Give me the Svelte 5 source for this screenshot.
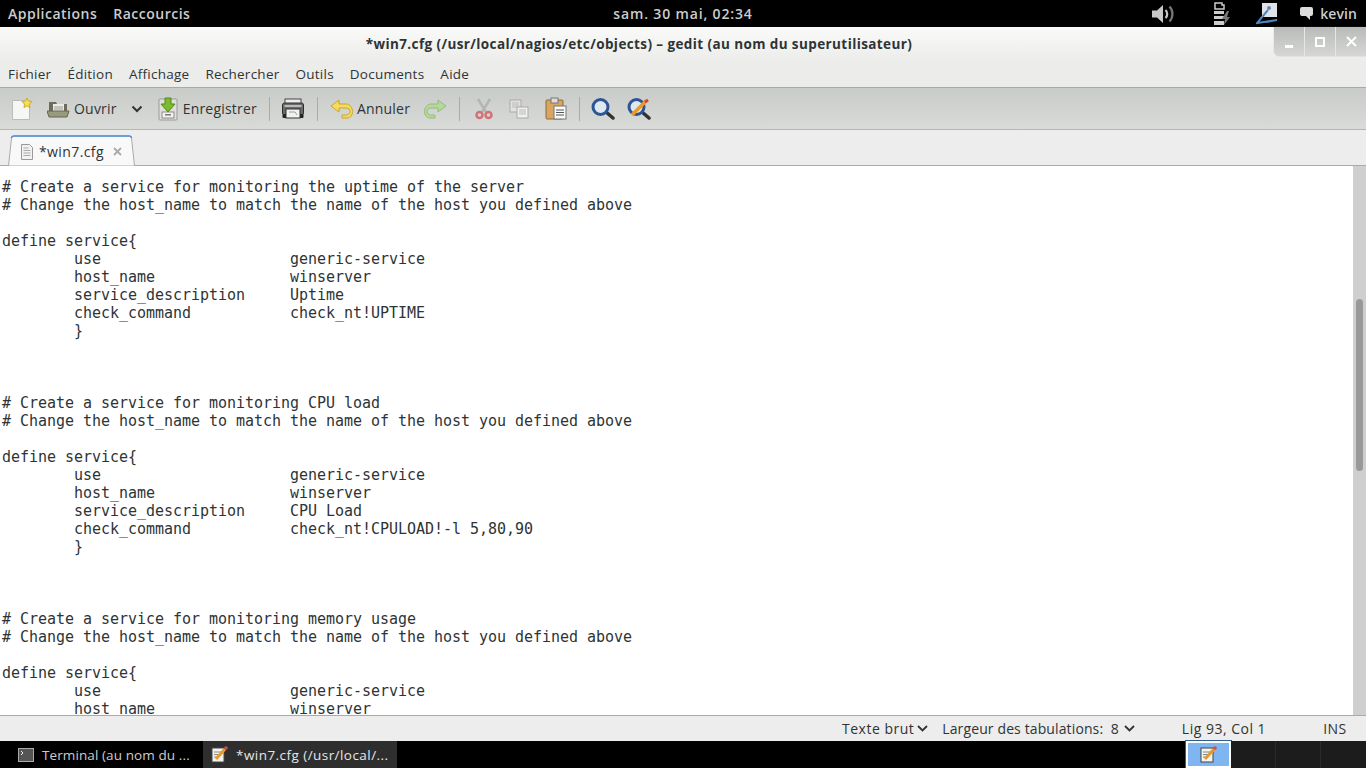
<script lang="ts">
  const menus = ['Fichier', 'Édition', 'Affichage', 'Rechercher', 'Outils', 'Documents', 'Aide'];

  const block = (what: string, desc: string, cmd: string) => `# Create a service for monitoring ${what}
# Change the host_name to match the name of the host you defined above

define service{
        use                     generic-service
        host_name               winserver
        service_description     ${desc}
        check_command           ${cmd}
        }`;

  const code = [
    block('the uptime of the server', 'Uptime', 'check_nt!UPTIME'),
    block('CPU load', 'CPU Load', 'check_nt!CPULOAD!-l 5,80,90'),
    `# Create a service for monitoring memory usage
# Change the host_name to match the name of the host you defined above

define service{
        use                     generic-service
        host_name               winserver`
  ].join('\n\n\n\n');
</script>

<div class="screen">
  <header class="panel">
    <nav class="panel-left">
      <span>Applications</span>
      <span>Raccourcis</span>
    </nav>
    <div class="clock">sam. 30 mai, 02:34</div>
    <div class="panel-right">
      <svg class="tray vol" width="24" height="20" viewBox="0 0 24 20">
        <path d="M0 6.500h5l6-5.500v18l-6-5.500H0z" fill="#c8c8c8" />
        <path d="M13.500 6a5.500 5.500 0 0 1 0 8" fill="none" stroke="#c8c8c8" stroke-width="2.200" />
        <path d="M17.500 2.500a11 11 0 0 1 0 15" fill="none" stroke="#777" stroke-width="2.200" />
      </svg>
      <svg class="tray bat" width="18" height="24" viewBox="0 0 18 24">
        <path d="M2 1h7v2h2v4H2z" fill="none" stroke="#ccc" stroke-width="1.500" />
        <rect x="1" y="9" width="10" height="3" fill="#ccc" />
        <rect x="1" y="14" width="10" height="3" fill="#ccc" />
        <rect x="1" y="19" width="10" height="4" fill="#ccc" />
        <path d="M14 9l-5 8h3l-1 6 6-8h-3l2-6z" fill="#777" />
      </svg>
      <svg class="tray pen" width="24" height="24" viewBox="0 0 24 24">
        <rect x="6" y="1" width="15" height="14" fill="#dfe3e8" />
        <circle cx="13" cy="6" r="2" fill="#6d87a8" />
        <path d="M12 8L1 21l20-3-11 2" fill="none" stroke="#4a86c0" stroke-width="2" />
      </svg>
      <svg class="tray chat" width="15" height="15" viewBox="0 0 15 15">
        <path d="M3 1h9a2 2 0 0 1 2 2v5a2 2 0 0 1-2 2h-1v4l-4-4H3a2 2 0 0 1-2-2V3a2 2 0 0 1 2-2z" fill="#ddd" />
      </svg>
      <span class="user">kevin</span>
    </div>
  </header>

  <div class="window">
    <div class="titlebar">
      <div class="title">*win7.cfg (/usr/local/nagios/etc/objects) – gedit (au nom du superutilisateur)</div>
      <div class="wm-buttons">
        <button aria-label="Réduire"><span class="min"></span></button>
        <button aria-label="Agrandir"><span class="max"></span></button>
        <button aria-label="Fermer">
          <svg width="11" height="11" viewBox="0 0 11 11"><path d="M1 1l9 9M10 1l-9 9" stroke="#fff" stroke-width="2" /></svg>
        </button>
      </div>
    </div>

    <div class="menubar">
      {#each menus as m}<span>{m}</span>{/each}
    </div>

    <div class="toolbar">
      <svg class="ic new" width="24" height="24" viewBox="0 0 24 24">
        <path d="M2.500 3.500h15l2 3v16h-17z" fill="#f6f6f4" stroke="#bbb" />
        <path d="M17 1l1.500 3 3.500.5-2.500 2.500.5 3.500-3-1.700-3 1.700.5-3.500L12 4.500l3.500-.5z" fill="#f8e04a" stroke="#cfa92b" />
      </svg>
      <div class="tool open">
        <svg width="23" height="20" viewBox="0 0 23 20">
          <path d="M2 3h7l1 2h10v8H2z" fill="#6c6c58" />
          <rect x="6" y="5" width="11" height="9" fill="#ecece6" />
          <path d="M7 8h9M7 10h9" stroke="#999" />
          <path d="M0 12h22l-2 6H2z" fill="#9a9a80" stroke="#66664f" />
        </svg>
        <span>Ouvrir</span>
      </div>
      <svg class="chev open-chev" width="12" height="8" viewBox="0 0 12 8"><path d="M1.500 1.500L6 6l4.500-4.500" fill="none" stroke="#333" stroke-width="2" /></svg>
      <div class="tool save">
        <svg width="20" height="24" viewBox="0 0 20 24">
          <rect x="1" y="2" width="18" height="21" rx="1" fill="#e0e0d8" stroke="#999" />
          <rect x="4" y="15" width="12" height="6" fill="#f4f4f0" stroke="#888" />
          <rect x="7" y="17" width="6" height="1.500" fill="#777" />
          <path d="M7 1h6v6h4l-7 8-7-8h4z" fill="#7dba2f" stroke="#4f8a1a" />
        </svg>
        <span>Enregistrer</span>
      </div>
      <i class="sep s1"></i>
      <svg class="ic print" width="22" height="22" viewBox="0 0 22 22">
        <rect x="3" y="1" width="16" height="6" fill="#eee" stroke="#444" />
        <rect x="0.500" y="5" width="21" height="12" rx="2" fill="#6a6a6a" stroke="#2e2e2e" />
        <rect x="2.500" y="7" width="17" height="2" fill="#bbb" />
        <rect x="0.500" y="16" width="21" height="4" rx="1" fill="#222" />
        <rect x="4" y="11" width="14" height="9" fill="#f2f2f2" stroke="#333" />
        <path d="M7 14h6l2 3" stroke="#8ab08a" fill="none" />
      </svg>
      <i class="sep s2"></i>
      <div class="tool undo">
        <svg width="23" height="20" viewBox="0 0 23 20">
          <path d="M9 1L1 7l8 6V9h7c3 0 4 1.500 4 3.500S18.500 16 16 16h-4v3h5c3.500 0 5.500-3 5.500-6.500S20 5 16 5H9z" fill="#f6dc5c" stroke="#c8a52a" />
        </svg>
        <span>Annuler</span>
      </div>
      <svg class="ic redo" width="23" height="20" viewBox="0 0 23 20">
        <path d="M14 1l8 6-8 6V9H7c-3 0-4 1.500-4 3.500S4.500 16 7 16h4v3H6C2.500 19 .5 16 .5 12.500S3 5 7 5h7z" fill="#b6d99a" stroke="#93bc78" />
      </svg>
      <i class="sep s3"></i>
      <svg class="ic cut" width="18" height="22" viewBox="0 0 18 22">
        <path d="M3 1l8 13M15 1L7 14" stroke="#b4b4b4" stroke-width="2.500" />
        <circle cx="4.500" cy="17" r="3" fill="none" stroke="#cf7378" stroke-width="2.500" />
        <circle cx="13.500" cy="17" r="3" fill="none" stroke="#cf7378" stroke-width="2.500" />
      </svg>
      <svg class="ic copy" width="20" height="20" viewBox="0 0 20 20">
        <rect x="1" y="1" width="11" height="12" fill="#e2e2e0" stroke="#aaa" />
        <path d="M3 4h7M3 6h7M3 8h7" stroke="#bbb" />
        <rect x="8" y="8" width="11" height="11" fill="#efefed" stroke="#aaa" />
        <path d="M10 11h7M10 13h7M10 15h7" stroke="#bbb" />
      </svg>
      <svg class="ic paste" width="22" height="23" viewBox="0 0 22 23">
        <rect x="1" y="3" width="17" height="19" rx="1" fill="#d9a55f" stroke="#8c6b3c" />
        <rect x="6" y="1" width="7" height="5" fill="#ddd" stroke="#777" />
        <rect x="9" y="9" width="12" height="13" fill="#fafafa" stroke="#777" />
        <path d="M11 13h8M11 15.500h8M11 18h8" stroke="#555" />
      </svg>
      <i class="sep s4"></i>
      <svg class="ic find" width="24" height="22" viewBox="0 0 24 22">
        <path d="M15 14l7 6" stroke="#333" stroke-width="3.500" stroke-linecap="round" />
        <circle cx="9.500" cy="9" r="7.500" fill="#dfe7ef" stroke="#2c5597" stroke-width="3" />
      </svg>
      <svg class="ic replace" width="24" height="22" viewBox="0 0 24 22">
        <path d="M15 14l7 6" stroke="#333" stroke-width="3.500" stroke-linecap="round" />
        <circle cx="9.500" cy="9" r="7.500" fill="#dfe7ef" stroke="#2c5597" stroke-width="3" />
        <path d="M5 17L19 3" stroke="#e89a2c" stroke-width="3.500" />
        <path d="M18 4l3-2" stroke="#cc4444" stroke-width="3" />
      </svg>
    </div>

    <div class="tabbar">
      <div class="tab">
        <svg class="tab-shape" width="127" height="31" viewBox="0 0 127 31">
          <path d="M.5 31L3.500 3Q3.800 1 6 1H121Q123.200 1 123.500 3L126.500 31z" fill="#f9f9f9" stroke="#a9aba9" />
          <path d="M3.500 3Q3.800 1 6 1H121Q123.200 1 123.500 3" fill="none" stroke="#4a90d9" stroke-width="1.500" />
        </svg>
        <svg class="tab-icon" width="14" height="16" viewBox="0 0 14 16">
          <path d="M1.500.5h8l3 3v12h-11z" fill="#f2f2f2" stroke="#999" />
          <path d="M3.500 4h5M3.500 6.500h7M3.500 9h7M3.500 11.500h7" stroke="#aaa" />
        </svg>
        <span class="tab-name">*win7.cfg</span>
        <svg class="tab-close" width="9" height="9" viewBox="0 0 9 9"><path d="M1 1l7 7M8 1L1 8" stroke="#aaa" stroke-width="1.800" /></svg>
      </div>
    </div>

    <div class="editor">
      <pre>{code}</pre>
      <div class="scroll"><div class="thumb"></div></div>
    </div>

    <div class="statusbar">
      <span class="st-lang">Texte brut</span>
      <svg class="chev c1" width="11" height="7" viewBox="0 0 11 7"><path d="M1 1l4.500 4.500L10 1" fill="none" stroke="#333" stroke-width="1.800" /></svg>
      <span class="st-tab">Largeur des tabulations:&nbsp; 8</span>
      <svg class="chev c2" width="11" height="7" viewBox="0 0 11 7"><path d="M1 1l4.500 4.500L10 1" fill="none" stroke="#333" stroke-width="1.800" /></svg>
      <span class="st-pos">Lig 93, Col 1</span>
      <span class="st-ins">INS</span>
    </div>
  </div>

  <footer class="taskbar">
    <div class="task">
      <svg width="16" height="14" viewBox="0 0 16 14">
        <rect x=".5" y=".5" width="15" height="13" fill="#555" stroke="#aaa" />
        <path d="M3 3l2 2-2 2" stroke="#eee" fill="none" />
      </svg>
      <span>Terminal (au nom du ...</span>
    </div>
    <div class="task active">
      <svg width="17" height="17" viewBox="0 0 17 17">
        <rect x="1" y="2" width="12" height="14" fill="#f2f2ee" stroke="#444" />
        <path d="M3 6h8M3 8.500h6M3 11h4" stroke="#888" />
        <path d="M5 13L14 3" stroke="#e89a2c" stroke-width="3" />
        <circle cx="15" cy="2" r="1.800" fill="#d84a4a" />
      </svg>
      <span>*win7.cfg (/usr/local/...</span>
    </div>
    <div class="workspaces">
      <div class="ws current">
        <svg width="17" height="17" viewBox="0 0 17 17">
          <rect x="1" y="2" width="12" height="14" fill="#f2f2ee" stroke="#444" />
          <path d="M3 6h8M3 8.500h6M3 11h4" stroke="#888" />
          <path d="M5 13L14 3" stroke="#e89a2c" stroke-width="3" />
          <circle cx="15" cy="2" r="1.800" fill="#d84a4a" />
        </svg>
      </div>
      <div class="ws"></div>
      <div class="ws"></div>
      <div class="ws"></div>
    </div>
  </footer>
</div>

<style>
  :global(body) {
    margin: 0;
    overflow: hidden;
  }
  .screen {
    width: 1366px;
    height: 768px;
    display: flex;
    flex-direction: column;
    font-family: "Open Sans", "Noto Sans", sans-serif;
    font-size: 14px;
    color: #2e3436;
    background: #000;
  }

  .panel {
    height: 27px;
    flex: none;
    background: #000;
    color: #ccc;
    display: grid;
    grid-template-columns: 1fr auto 1fr;
    align-items: center;
    font-weight: 600;
    font-size: 14px;
    letter-spacing: 0.5px;
  }
  .panel-left {
    display: flex;
    gap: 16px;
    padding-left: 8px;
  }
  .clock {
    letter-spacing: 0.85px;
  }
  .panel-right {
    display: flex;
    align-items: center;
    justify-content: flex-end;
    padding-right: 9px;
  }
  .tray {
    flex: none;
  }
  .vol { margin-right: 37px; }
  .bat { margin-right: 25px; }
  .pen { margin-right: 19px; }
  .user { margin-left: 6px; letter-spacing: 0.1px; }

  .window {
    flex: 1;
    min-height: 0;
    display: flex;
    flex-direction: column;
    background: #ededed;
  }
  .titlebar {
    height: 34px;
    flex: none;
    box-sizing: border-box;
    padding-right: 88px;
    position: relative;
    display: flex;
    align-items: center;
    justify-content: center;
    background: linear-gradient(#fafaf8, #ececea);
    font-weight: 700;
    font-size: 13.500px;
    letter-spacing: 0.4px;
    color: #2e3436;
  }
  .title {
    margin-top: -1px;
  }
  .wm-buttons {
    position: absolute;
    top: 0;
    right: 0;
    height: 29px;
    display: flex;
    background: linear-gradient(#b9bbb8, #d6d7d5);
    border-radius: 0 0 0 6px;
    box-shadow: 0 0 1px #888;
  }
  .wm-buttons button {
    width: 31px;
    padding: 0;
    border: 0;
    border-left: 1px solid #e6e6e4;
    background: none;
    display: flex;
    align-items: center;
    justify-content: center;
  }
  .wm-buttons button:first-child {
    border-left: 0;
    width: 30px;
  }
  .min {
    width: 8px;
    height: 3px;
    margin-top: 9px;
    background: #fff;
  }
  .max {
    width: 6px;
    height: 6px;
    border: 2px solid #fff;
  }

  .menubar {
    height: 26px;
    flex: none;
    display: flex;
    align-items: center;
    gap: 16px;
    padding-left: 8px;
    background: #ececea;
    font-size: 13.500px;
    letter-spacing: 0.25px;
  }

  .toolbar {
    height: 43px;
    flex: none;
    box-sizing: border-box;
    display: flex;
    align-items: center;
    background: linear-gradient(#c9cbc9, #d9dbd9);
    border-top: 1px solid #a8aaa8;
    border-bottom: 1px solid #b4b6b4;
    padding-left: 10px;
    font-size: 14px;
    letter-spacing: 0.2px;
    color: #2e3436;
  }
  .tool {
    display: flex;
    align-items: center;
    gap: 4px;
  }
  .ic, .tool svg, .chev {
    flex: none;
  }
  .sep {
    width: 1px;
    height: 24px;
    background: #a9aba9;
    flex: none;
  }
  .open { margin-left: 13px; }
  .open-chev { margin-left: 14px; }
  .save { margin-left: 15px; gap: 5px; }
  .s1 { margin-left: 12px; }
  .print { margin-left: 12px; }
  .s2 { margin-left: 13px; }
  .undo { margin-left: 12px; }
  .redo { margin-left: 14px; }
  .s3 { margin-left: 12px; }
  .cut { margin-left: 15px; }
  .copy { margin-left: 16px; }
  .paste { margin-left: 16px; }
  .s4 { margin-left: 12px; }
  .find { margin-left: 11px; }
  .replace { margin-left: 12px; }

  .tabbar {
    height: 36px;
    flex: none;
    box-sizing: border-box;
    display: flex;
    align-items: flex-end;
    padding-left: 8px;
    background: #ededed;
    border-bottom: 1px solid #a9aba9;
  }
  .tab {
    position: relative;
    height: 31px;
    width: 127px;
    box-sizing: border-box;
    margin-bottom: -1px;
    display: flex;
    align-items: center;
    padding: 2px 0 0 12px;
  }
  .tab-shape {
    position: absolute;
    left: 0;
    top: 0;
  }
  .tab-icon, .tab-close, .tab-name {
    position: relative;
  }
  .tab-name {
    font-size: 14px;
    letter-spacing: 0.4px;
    margin: 0 9px 0 5px;
  }

  .editor {
    flex: 1;
    min-height: 0;
    display: flex;
    background: #fff;
    border-bottom: 1px solid #a9aba9;
    overflow: hidden;
  }
  pre {
    flex: 1;
    margin: 0;
    padding: 12px 0 0 2px;
    font-family: "DejaVu Sans Mono", monospace;
    font-size: 15px;
    letter-spacing: -0.03px;
    line-height: 18px;
    color: #2e3436;
    overflow: hidden;
    tab-size: 8;
  }
  .scroll {
    width: 13px;
    flex: none;
    background: #cfcfcf;
    padding: 133px 3px 0;
    box-sizing: border-box;
  }
  .thumb {
    height: 172px;
    background: #98999b;
    border-radius: 4px;
  }

  .statusbar {
    height: 25px;
    flex: none;
    display: flex;
    align-items: center;
    background: #ededed;
    font-size: 14px;
    letter-spacing: 0.5px;
  }
  .st-lang { margin-left: 842px; }
  .c1 { margin-left: 3px; }
  .c2 { margin-left: 5px; }
  .st-tab { margin-left: 14px; letter-spacing: 0.12px; }
  .st-pos { margin-left: 47px; }
  .st-ins { margin-left: 57px; }

  .taskbar {
    height: 27px;
    flex: none;
    background: #000;
    color: #ccc;
    display: flex;
    align-items: stretch;
    font-size: 13.500px;
    font-weight: 500;
    letter-spacing: 0.1px;
  }
  .task {
    width: 204px;
    display: flex;
    align-items: center;
    gap: 8px;
    padding-left: 18px;
    box-sizing: border-box;
  }
  .task.active {
    background: #2e2e2e;
    color: #e6e6e6;
    width: 194px;
    padding-left: 8px;
    margin-left: -1px;
    letter-spacing: 0.45px;
  }
  .workspaces {
    margin-left: auto;
    display: flex;
  }
  .ws {
    width: 45px;
    border-right: 1px solid #2a2a2a;
    background: #1c1c1c;
    box-sizing: border-box;
  }
  .ws:last-child {
    border-right: 0;
  }
  .ws.current {
    background: #7fb5f0;
    border: 2px solid #fff;
    box-shadow: 0 0 0 1px #2d5f8f;
    display: flex;
    align-items: center;
    justify-content: center;
  }
</style>
